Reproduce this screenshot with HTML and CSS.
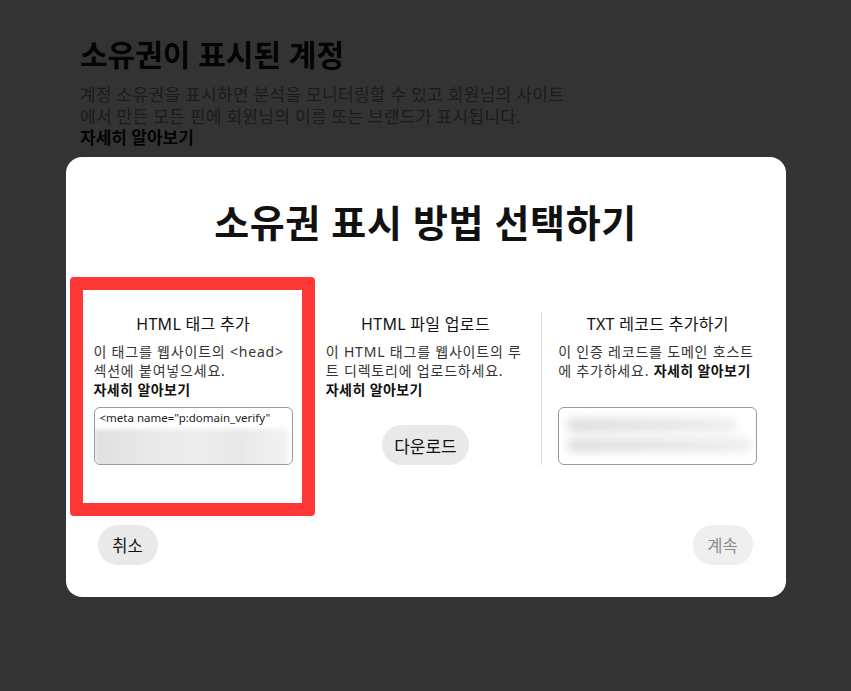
FILE: index.html
```html
<!DOCTYPE html>
<html lang="ko">
<head>
<meta charset="utf-8">
<title>소유권 표시 방법 선택하기</title>
<link rel="stylesheet" href="styles.css">
</head>
<body>
<div class="page">
  <h1 class="bg-title">소유권이 표시된 계정</h1>
  <p class="bg-desc">계정 소유권을 표시하면 분석을 모니터링할 수 있고 회원님의 사이트<br>에서 만든 모든 핀에 회원님의 이름 또는 브랜드가 표시됩니다.<br><a class="bg-link">자세히 알아보기</a></p>
</div>
<div class="overlay">
  <div class="modal">
    <h2 class="modal-title">소유권 표시 방법 선택하기</h2>
    <div class="options">
      <div class="option">
        <div class="opt-title">HTML 태그 추가</div>
        <p class="opt-desc">이 태그를 웹사이트의 &lt;head&gt;<br>섹션에 붙여넣으세요.<br><a class="opt-link">자세히 알아보기</a></p>
        <div class="code-box">
          <div class="code-line">&lt;meta name="p:domain_verify"</div>
          <div class="blur-block"></div>
        </div>
      </div>
      <div class="option sep">
        <div class="opt-title">HTML 파일 업로드</div>
        <p class="opt-desc">이 HTML 태그를 웹사이트의 루<br>트 디렉토리에 업로드하세요.<br><a class="opt-link">자세히 알아보기</a></p>
        <button class="pill download">다운로드</button>
      </div>
      <div class="option sep">
        <div class="opt-title">TXT 레코드 추가하기</div>
        <p class="opt-desc">이 인증 레코드를 도메인 호스트<br>에 추가하세요. <a class="opt-link">자세히 알아보기</a></p>
        <div class="code-box txt">
          <div class="blur-row r1"></div>
          <div class="blur-row r2"></div>
        </div>
      </div>
    </div>
    <div class="actions">
      <button class="pill">취소</button>
      <button class="pill disabled">계속</button>
    </div>
    <div class="highlight"></div>
  </div>
</div>
</body>
</html>
```
FILE: styles.css
```css
* { box-sizing: border-box; }
html, body {
  margin: 0;
  padding: 0;
  background: #ffffff;
  font-family: "Noto Sans", "Noto Sans CJK KR", sans-serif;
}
.page {
  padding: 35px 0 0 80px;
}
.bg-title {
  margin: 0;
  font-size: 30px;
  line-height: 40px;
  font-weight: 700;
  color: #111111;
}
.bg-desc {
  margin: 9px 0 0;
  font-size: 17px;
  line-height: 21.5px;
  letter-spacing: 0.3px;
  color: #8a8a8a;
  white-space: nowrap;
}
.bg-link {
  color: #111111;
  font-weight: 700;
  letter-spacing: 0;
}
.overlay {
  position: fixed;
  inset: 0;
  background: rgba(0, 0, 0, 0.8);
  display: flex;
  justify-content: center;
  align-items: flex-start;
  padding-top: 157px;
}
.modal {
  position: relative;
  width: 720px;
  height: 440px;
  background: #ffffff;
  border-radius: 16px;
  padding: 43px 12px 32px;
  display: flex;
  flex-direction: column;
}
.modal-title {
  margin: 0;
  text-align: center;
  font-size: 38px;
  line-height: 44px;
  font-weight: 700;
  letter-spacing: 0.6px;
  color: #111111;
}
.options {
  margin-top: 68px;
  display: flex;
}
.option {
  flex: 1 1 0;
  min-width: 0;
  padding: 0 16px;
  display: flex;
  flex-direction: column;
}
.option.sep {
  border-left: 1px solid #dddddd;
}
.opt-title {
  text-align: center;
  font-size: 16px;
  line-height: 24px;
  font-weight: 400;
  letter-spacing: 0.3px;
  color: #111111;
}
.opt-desc {
  margin: 6px 0 8px;
  font-size: 14px;
  line-height: 19px;
  letter-spacing: 0.8px;
  color: #333333;
  white-space: nowrap;
}
.opt-link {
  font-weight: 700;
  color: #111111;
  letter-spacing: 0.4px;
}
.code-box {
  margin-top: auto;
  height: 58px;
  border: 1px solid #9a9a9a;
  border-radius: 6px;
  overflow: hidden;
  padding: 3px 0 0 5px;
}
.code-line {
  font-size: 11.5px;
  line-height: 14px;
  color: #222222;
  white-space: nowrap;
}
.blur-block {
  margin: 4px 4px 0 -6px;
  height: 40px;
  background: linear-gradient(90deg, #e0e0e0 0%, #e9e9e9 30%, #ededed 55%, #e8e8e8 75%, #f2f2f2 100%);
  filter: blur(2.5px);
}
.code-box.txt {
  padding: 10px 8px 0;
}
.blur-row {
  height: 14px;
  border-radius: 7px;
  filter: blur(5px);
}
.blur-row.r1 {
  width: 170px;
  background: linear-gradient(90deg, #dddddd, #e6e6e6 60%, #efefef);
}
.blur-row.r2 {
  margin-top: 6px;
  width: 185px;
  background: linear-gradient(90deg, #dedede, #e5e5e5 50%, #eeeeee);
}
.pill {
  height: 40px;
  min-width: 60px;
  padding: 0 14px;
  border: none;
  border-radius: 20px;
  background: #e9e9e9;
  font-family: "Noto Sans", "Noto Sans CJK KR", sans-serif;
  font-size: 16.5px;
  color: #111111;
}
.download {
  margin-top: auto;
  align-self: center;
  padding: 0 12px;
  font-size: 17px;
}
.actions {
  margin-top: auto;
  display: flex;
  justify-content: space-between;
  padding: 0 21px 0 20px;
}
.pill.disabled {
  background: #efefef;
  color: #8a8a8a;
}
.highlight {
  position: absolute;
  left: 4px;
  top: 120px;
  width: 245px;
  height: 239px;
  border: 13px solid #ff3636;
  border-radius: 4px;
}
```
